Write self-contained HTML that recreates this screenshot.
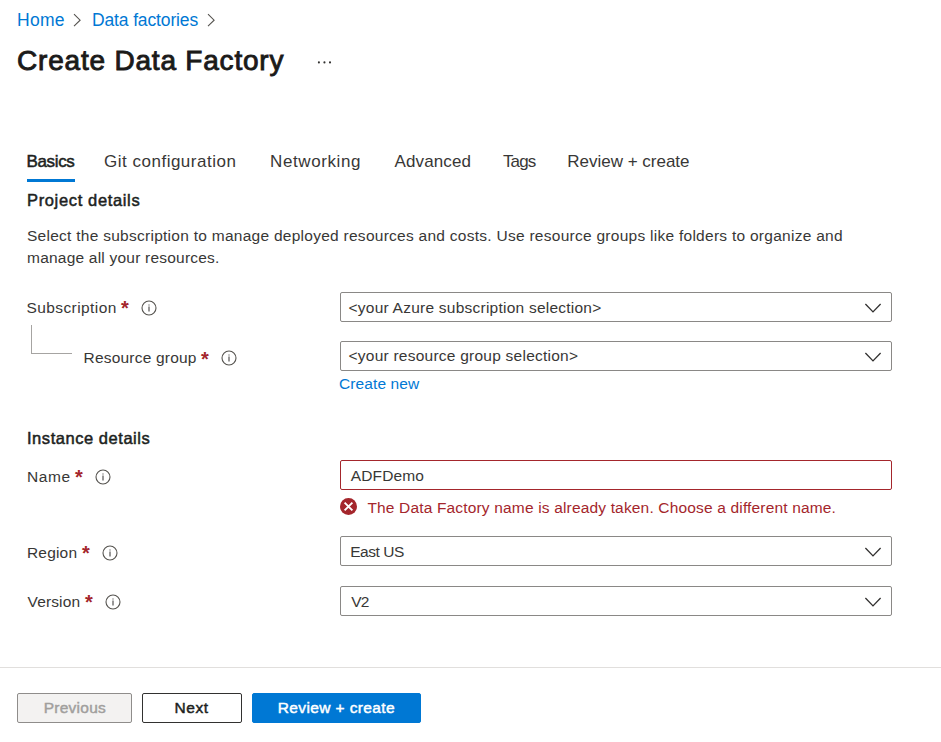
<!DOCTYPE html>
<html><head><meta charset="utf-8">
<title>Create Data Factory</title>
<style>
*{box-sizing:border-box;margin:0;padding:0}
html,body{width:941px;height:742px;background:#fff;overflow:hidden}
body{font-family:"Liberation Sans",sans-serif;color:#323130;position:relative}
.t{position:absolute;white-space:nowrap;line-height:1;z-index:5}
.a{position:absolute}
.box{position:absolute;left:340px;width:552px;height:30px;border:1px solid #8a8886;border-radius:2px;background:#fff}
.btn{position:absolute;top:693px;height:30px;border-radius:2px}
</style></head><body>
<!-- boxes -->
<div class="box" style="top:292px"></div>
<div class="box" style="top:341px"></div>
<div class="box" style="top:460px;border-color:#a4262c"></div>
<div class="box" style="top:536px"></div>
<div class="box" style="top:586px"></div>
<!-- tree line -->
<div class="a" style="left:31px;top:325px;width:41px;height:29px;border-left:1px solid #a6a4a2;border-bottom:1px solid #a6a4a2"></div>
<!-- tab underline -->
<div class="a" style="left:27px;top:179px;width:48px;height:3px;background:#0078d4"></div>
<!-- footer -->
<div class="a" style="left:0;top:667px;width:941px;height:1px;background:#e1dfdd"></div>
<div class="btn" style="left:17px;width:115px;background:#f3f2f1;border:1px solid #8f8d8b"></div>
<div class="btn" style="left:142px;width:100px;background:#fff;border:1px solid #323130"></div>
<div class="btn" style="left:252px;width:169px;background:#0078d4;border:1px solid #0078d4"></div>
<!-- icons -->
<svg class="a" style="left:315px;top:58px" width="20" height="9" viewBox="315 58 20 9"><circle cx="318.9" cy="62.4" r="1.05" fill="#323130"/><circle cx="324.45" cy="62.4" r="1.05" fill="#323130"/><circle cx="330" cy="62.4" r="1.05" fill="#323130"/></svg>
<svg class="a" style="left:72.2px;top:12px" width="12" height="17" viewBox="0 0 12 17"><path d="M2 2.2 L8.1 8.2 L2 14.2" fill="none" stroke="#55534f" stroke-width="1.1"/></svg>
<svg class="a" style="left:206.2px;top:12px" width="12" height="17" viewBox="0 0 12 17"><path d="M2 2.2 L8.1 8.2 L2 14.2" fill="none" stroke="#55534f" stroke-width="1.1"/></svg>
<svg class="a" style="left:863px;top:299.9px" width="20" height="16" viewBox="-10 -8 20 16"><path d="M-7.6 -4 L0 3.9 L7.6 -4" fill="none" stroke="#323130" stroke-width="1.3"/></svg>
<svg class="a" style="left:863px;top:348.8px" width="20" height="16" viewBox="-10 -8 20 16"><path d="M-7.6 -4 L0 3.9 L7.6 -4" fill="none" stroke="#323130" stroke-width="1.3"/></svg>
<svg class="a" style="left:863px;top:543.5px" width="20" height="16" viewBox="-10 -8 20 16"><path d="M-7.6 -4 L0 3.9 L7.6 -4" fill="none" stroke="#323130" stroke-width="1.3"/></svg>
<svg class="a" style="left:863px;top:594.3px" width="20" height="16" viewBox="-10 -8 20 16"><path d="M-7.6 -4 L0 3.9 L7.6 -4" fill="none" stroke="#323130" stroke-width="1.3"/></svg>
<svg class="a" style="left:339px;top:497px" width="19" height="19" viewBox="-9.5 -9.5 19 19"><circle r="8.5" fill="#a4262c"/><path d="M-3.9 -3.9 L3.9 3.9 M3.9 -3.9 L-3.9 3.9" stroke="#fff" stroke-width="1.9" fill="none"/></svg>
<svg class="a" style="left:139.5px;top:298.5px" width="18" height="18" viewBox="-9 -9 18 18"><circle r="7" fill="none" stroke="#55534f" stroke-width="1.1"/><rect x="-0.5" y="-1.5" width="1" height="5" fill="#323130"/><rect x="-0.5" y="-3.5" width="1" height="1" fill="#323130"/></svg>
<svg class="a" style="left:219.5px;top:348.5px" width="18" height="18" viewBox="-9 -9 18 18"><circle r="7" fill="none" stroke="#55534f" stroke-width="1.1"/><rect x="-0.5" y="-1.5" width="1" height="5" fill="#323130"/><rect x="-0.5" y="-3.5" width="1" height="1" fill="#323130"/></svg>
<svg class="a" style="left:93.5px;top:467.5px" width="18" height="18" viewBox="-9 -9 18 18"><circle r="7" fill="none" stroke="#55534f" stroke-width="1.1"/><rect x="-0.5" y="-1.5" width="1" height="5" fill="#323130"/><rect x="-0.5" y="-3.5" width="1" height="1" fill="#323130"/></svg>
<svg class="a" style="left:100.5px;top:543.5px" width="18" height="18" viewBox="-9 -9 18 18"><circle r="7" fill="none" stroke="#55534f" stroke-width="1.1"/><rect x="-0.5" y="-1.5" width="1" height="5" fill="#323130"/><rect x="-0.5" y="-3.5" width="1" height="1" fill="#323130"/></svg>
<svg class="a" style="left:103.5px;top:592.5px" width="18" height="18" viewBox="-9 -9 18 18"><circle r="7" fill="none" stroke="#55534f" stroke-width="1.1"/><rect x="-0.5" y="-1.5" width="1" height="5" fill="#323130"/><rect x="-0.5" y="-3.5" width="1" height="1" fill="#323130"/></svg>
<div id="bc1" class="t" style="left:17.00px;top:12.00px;font-size:17.5px;letter-spacing:0.300px;color:#0078d4;">Home</div>
<div id="bc2" class="t" style="left:92.00px;top:12.00px;font-size:17.5px;letter-spacing:-0.138px;color:#0078d4;">Data factories</div>
<div id="title" class="t" style="left:17.00px;top:47.00px;font-size:28px;letter-spacing:0.800px;color:#1b1a19;-webkit-text-stroke:0.9px #1b1a19;">Create Data Factory</div>
<div id="tab1" class="t" style="left:26.50px;top:153.00px;font-size:17px;letter-spacing:-0.360px;color:#201f1e;-webkit-text-stroke:0.5px #201f1e;">Basics</div>
<div id="tab2" class="t" style="left:104.00px;top:153.00px;font-size:17px;letter-spacing:0.506px;color:#383736;">Git configuration</div>
<div id="tab3" class="t" style="left:270.00px;top:153.00px;font-size:17px;letter-spacing:0.600px;color:#383736;">Networking</div>
<div id="tab4" class="t" style="left:394.50px;top:153.00px;font-size:17px;letter-spacing:0.129px;color:#383736;">Advanced</div>
<div id="tab5" class="t" style="left:503.00px;top:153.00px;font-size:17px;letter-spacing:-0.900px;color:#383736;">Tags</div>
<div id="tab6" class="t" style="left:567.20px;top:153.00px;font-size:17px;letter-spacing:0.000px;color:#383736;">Review + create</div>
<div id="h1" class="t" style="left:27.00px;top:192.00px;font-size:16.5px;letter-spacing:0.643px;color:#201f1e;-webkit-text-stroke:0.5px #201f1e;">Project details</div>
<div id="p1" class="t" style="left:27.00px;top:228.00px;font-size:15.5px;letter-spacing:0.268px;color:#383736;">Select the subscription to manage deployed resources and costs. Use resource groups like folders to organize and</div>
<div id="p2" class="t" style="left:27.00px;top:250.00px;font-size:15.5px;letter-spacing:0.216px;color:#383736;">manage all your resources.</div>
<div id="l1" class="t" style="left:26.50px;top:300.00px;font-size:15.5px;letter-spacing:0.409px;color:#383736;">Subscription</div>
<div id="l2" class="t" style="left:83.50px;top:350.00px;font-size:15.5px;letter-spacing:0.208px;color:#383736;">Resource group</div>
<div id="v1" class="t" style="left:348.50px;top:300.00px;font-size:15.5px;letter-spacing:0.238px;color:#383736;">&lt;your Azure subscription selection&gt;</div>
<div id="v2" class="t" style="left:348.50px;top:348.00px;font-size:15.5px;letter-spacing:0.240px;color:#383736;">&lt;your resource group selection&gt;</div>
<div id="cn" class="t" style="left:339.00px;top:376.00px;font-size:15.5px;letter-spacing:0.100px;color:#0078d4;">Create new</div>
<div id="h2" class="t" style="left:27.00px;top:430.00px;font-size:16.5px;letter-spacing:0.540px;color:#201f1e;-webkit-text-stroke:0.5px #201f1e;">Instance details</div>
<div id="l3" class="t" style="left:27.00px;top:469.00px;font-size:15.5px;letter-spacing:0.600px;color:#383736;">Name</div>
<div id="v3" class="t" style="left:350.70px;top:468.00px;font-size:15.5px;letter-spacing:0.150px;color:#383736;">ADFDemo</div>
<div id="err" class="t" style="left:367.40px;top:500.00px;font-size:15.5px;letter-spacing:0.166px;color:#a4262c;">The Data Factory name is already taken. Choose a different name.</div>
<div id="l4" class="t" style="left:27.00px;top:545.00px;font-size:15.5px;letter-spacing:0.180px;color:#383736;">Region</div>
<div id="v4" class="t" style="left:350.20px;top:544.00px;font-size:15.5px;letter-spacing:-0.450px;color:#383736;">East US</div>
<div id="l5" class="t" style="left:27.50px;top:594.00px;font-size:15.5px;letter-spacing:0.150px;color:#383736;">Version</div>
<div id="v5" class="t" style="left:351.20px;top:594.00px;font-size:15.5px;letter-spacing:-0.900px;color:#383736;">V2</div>
<div id="b1" class="t" style="left:43.70px;top:700.00px;font-size:15.5px;letter-spacing:0.257px;color:#a19f9d;-webkit-text-stroke:0.45px #a19f9d;">Previous</div>
<div id="b2" class="t" style="left:174.50px;top:700.00px;font-size:15.5px;letter-spacing:0.600px;color:#201f1e;-webkit-text-stroke:0.45px #201f1e;">Next</div>
<div id="b3" class="t" style="left:277.70px;top:700.00px;font-size:15.5px;letter-spacing:0.386px;color:#ffffff;-webkit-text-stroke:0.45px #ffffff;">Review + create</div>
<div id="s1" class="t" style="left:121.00px;top:298.00px;font-size:20px;letter-spacing:0.000px;color:#a4262c;font-weight:bold;">*</div>
<div id="s2" class="t" style="left:201.00px;top:348.50px;font-size:20px;letter-spacing:0.000px;color:#a4262c;font-weight:bold;">*</div>
<div id="s3" class="t" style="left:75.00px;top:467.00px;font-size:20px;letter-spacing:0.000px;color:#a4262c;font-weight:bold;">*</div>
<div id="s4" class="t" style="left:82.00px;top:543.00px;font-size:20px;letter-spacing:0.000px;color:#a4262c;font-weight:bold;">*</div>
<div id="s5" class="t" style="left:85.00px;top:592.00px;font-size:20px;letter-spacing:0.000px;color:#a4262c;font-weight:bold;">*</div>
</body></html>
